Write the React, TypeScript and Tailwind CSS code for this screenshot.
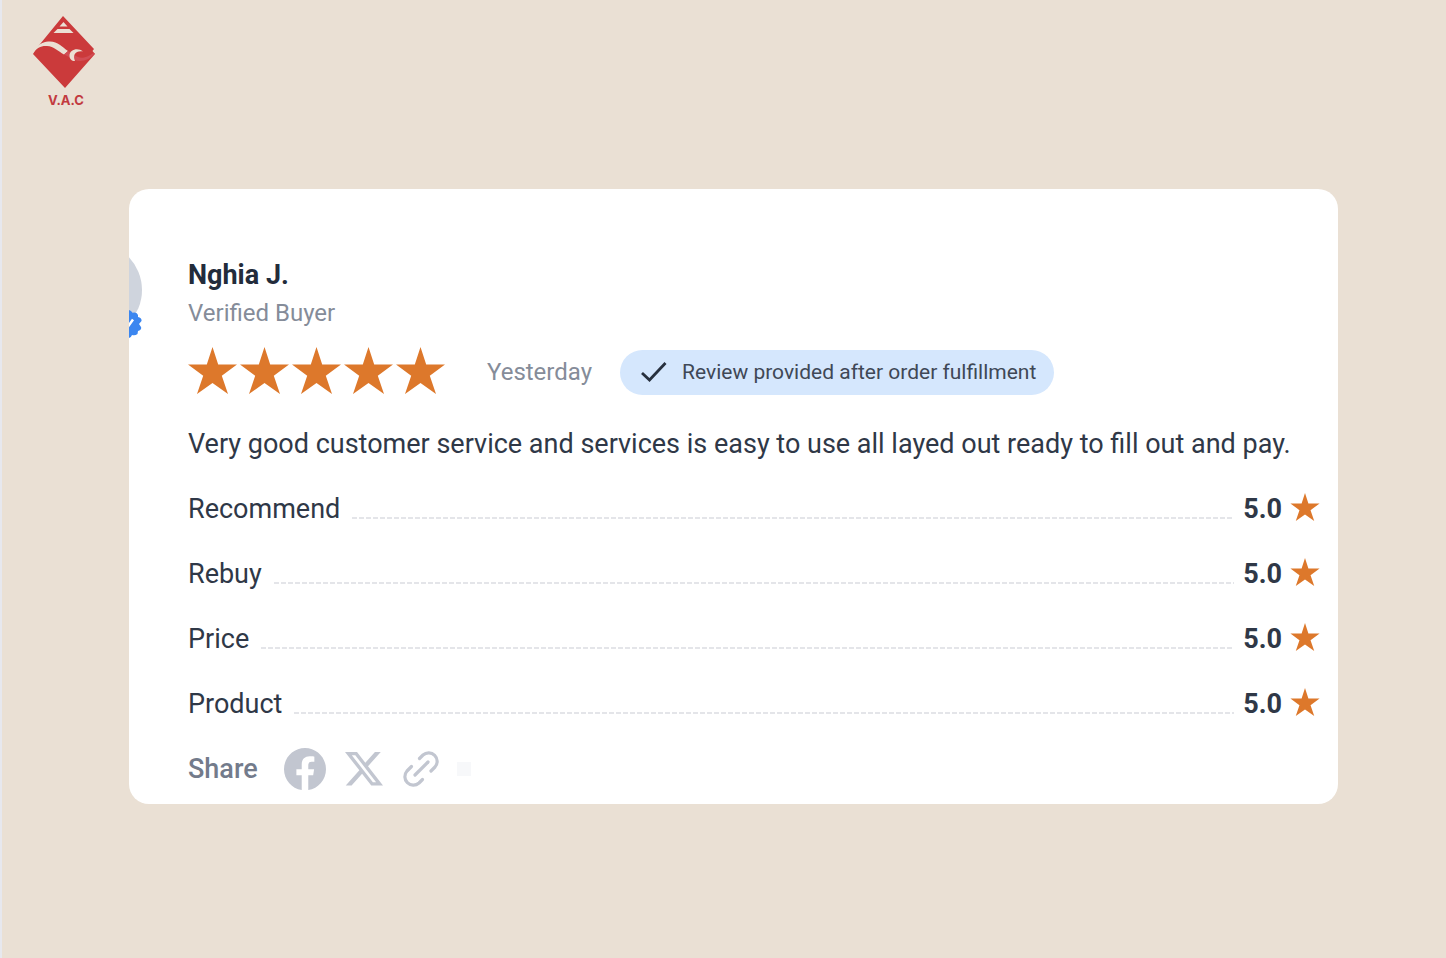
type Rating = {
    label: string;
    score: string;
};

const ratings: Rating[] = [
    { label: "Recommend", score: "5.0" },
    { label: "Rebuy", score: "5.0" },
    { label: "Price", score: "5.0" },
    { label: "Product", score: "5.0" },
];

function Star({ className }: { className: string }) {
    return (
        <svg viewBox="0 0 49 47" className={className} fill="#dd782b" aria-hidden="true">
            <path d="M24.5 0 30.2 17.5H49L33.8 28.8 40 47 24.5 36 9 47 15.2 28.8 0 17.5H18.8Z" />
        </svg>
    );
}

function Logo() {
    return (
        <a href="#" className="flex w-[66px] flex-col items-center text-[#c23a3f]">
            <svg viewBox="0 0 62 72" className="mr-1 h-[72px] w-[62px]" aria-hidden="true">
                <path d="M30 0 61 33 59.500 35 62 38 32 72 0 38 3 33Z" fill="#cb3a3b" />
                <path d="M30.500 6 34.500 10.500H26.500ZM24.500 13H36.500L40.500 17H20.500Z" fill="#ebe0d4" />
                <path
                    d="M1 33.500C7 27 12 25.500 17 25.500C25 25.500 29 31 35 35L31 38.500C25 35 21 30.500 14 30C8 29.500 4 32 0 37Z"
                    fill="#ebe0d4"
                />
                <path d="M31 38.500 35 35C40 38 45 43 51 41.500C56 40.500 59 37 62 37C58 42 53 45 47 45C40 45 37 41 31 38.500Z" fill="#d24d54" />
                <path d="M50 35.500C45 31 36.500 33.500 36.500 39.500C36.500 43 38.500 45 42 45C39.500 39.500 42 34.500 50 35.500Z" fill="#ebe0d4" />
            </svg>
            <span className="mt-1 font-[Inter,sans-serif] text-[13px] leading-4 font-bold">V.A.C</span>
        </a>
    );
}

function Avatar() {
    return (
        <div className="absolute top-[53px] -left-[83px] size-24 rounded-full bg-[#cfd4dd]">
            <svg viewBox="0 0 28 28" className="absolute right-0 bottom-0 size-7 overflow-visible" aria-label="Verified">
                <path
                    d="M14 0Q17 0 18.500 2.800Q23 1.500 24 5L24 7Q28 8 27.500 11L25 14 27 17Q28 20 24 21L23.500 24Q21 26 18 25Q17 28 14 28Q11 28 9.500 25Q5 26 4 22L4 20Q0 19 1 16L3 14 1 11Q0 8 4 7L4 5Q6 1.500 10 2.800Q11 0 14 0Z"
                    fill="#3b86f0"
                />
                <path d="M9 14.500 13 18 19 9.500" fill="none" stroke="white" strokeWidth="2.500" />
            </svg>
        </div>
    );
}

function RatingRow({ label, score }: Rating) {
    return (
        <li className="flex h-[65px] items-center">
            <span>{label}</span>
            <span className="mt-[18px] mr-[9px] ml-3 h-0.5 flex-1 bg-[repeating-linear-gradient(90deg,#e4e5e9_0_5px,transparent_5px_7px)]" />
            <span className="font-bold">{score}</span>
            <Star className="mb-1 ml-2 h-7 w-[30px]" />
        </li>
    );
}

function ShareLinks() {
    return (
        <div className="flex h-[42px] items-center text-[#c2c6d0]">
            <span className="mr-[26px] font-medium text-[#737b8b]">Share</span>
            <a href="#" aria-label="Share on Facebook" className="mr-[19px]">
                <svg viewBox="0 0 24 24" className="size-[42px]" fill="currentColor">
                    <path d="M24 12.073C24 5.405 18.627 0 12 0S0 5.405 0 12.073C0 18.100 4.388 23.094 10.125 24v-8.437H7.078v-3.490h3.047V9.413c0-3.026 1.792-4.697 4.533-4.697 1.312 0 2.686.236 2.686.236v2.971H15.830c-1.491 0-1.956.930-1.956 1.886v2.264h3.328l-.532 3.490h-2.796V24C19.612 23.094 24 18.100 24 12.073Z" />
                </svg>
            </a>
            <a href="#" aria-label="Share on X" className="mr-5">
                <svg viewBox="0 0 24 22" className="h-[34px] w-[38px]" preserveAspectRatio="none" fill="currentColor">
                    <path d="M18.900 0h3.680l-8.040 9.190L24 21.700h-7.410l-5.800-7.580-6.640 7.580H.470l8.600-9.830L0 0h7.590l5.240 6.930L18.900 0Zm-1.290 19.500h2.040L6.490 2.090H4.300L17.610 19.500Z" />
                </svg>
            </a>
            <a href="#" aria-label="Copy link">
                <svg
                    viewBox="0 0 36 36"
                    className="size-9"
                    fill="none"
                    stroke="currentColor"
                    strokeWidth="3.200"
                    strokeLinecap="round"
                    strokeLinejoin="round"
                >
                    <path d="M12 24 25 11" />
                    <path d="M16.500 7.500 20 4A8.500 8.500 0 0 1 32 16L28 20" />
                    <path d="M8.500 15.500 4 20A8.500 8.500 0 0 0 16 32L19.500 28.500" />
                </svg>
            </a>
            <span className="ml-[18px] size-3.5 bg-[#f7f8fa]" />
        </div>
    );
}

function ReviewCard() {
    return (
        <article className="relative overflow-hidden rounded-[20px] bg-white pt-[66px] pr-[18px] pb-3.5 pl-[59px] text-[27px] leading-10 text-[#2f3847]">
            <Avatar />
            <h1 className="font-bold text-[#232c3b]">Nghia J.</h1>
            <p className="text-2xl leading-9 text-[#858c99]">Verified Buyer</p>
            <div className="mt-4 flex h-[50px] items-center">
                <div className="flex gap-[3px]" role="img" aria-label="5 out of 5 stars">
                    {[1, 2, 3, 4, 5].map((n) => (
                        <Star key={n} className="mb-1 h-[47px] w-[49px]" />
                    ))}
                </div>
                <time className="ml-[42px] text-2xl text-[#858c99]">Yesterday</time>
                <span className="ml-7 flex h-[45px] items-center rounded-full bg-[#d5e7fd] pr-[18px] pl-[21px] text-[21px] text-[#3f4856]">
                    <svg
                        viewBox="0 0 26 22"
                        className="mr-[15px] h-[22px] w-[26px]"
                        fill="none"
                        stroke="#27303e"
                        strokeWidth="2.800"
                        aria-hidden="true"
                    >
                        <path d="M1 12 8.500 19 24.500 2" />
                    </svg>
                    Review provided after order fulfillment
                </span>
            </div>
            <p className="mt-[27px] mb-3">
                Very good customer service and services is easy to use all layed out ready to fill out and pay.
            </p>
            <ul className="mb-3">
                {ratings.map((rating) => (
                    <RatingRow key={rating.label} {...rating} />
                ))}
            </ul>
            <ShareLinks />
        </article>
    );
}

export default function App() {
    return (
        <div className="min-h-screen border-l-2 border-[#e7e8ee] bg-[#eae0d4] font-[Roboto,sans-serif]">
            <header className="px-[31px] pt-4">
                <Logo />
            </header>
            <main className="mt-[81px] mr-[108px] ml-[127px]">
                <ReviewCard />
            </main>
        </div>
    );
}
